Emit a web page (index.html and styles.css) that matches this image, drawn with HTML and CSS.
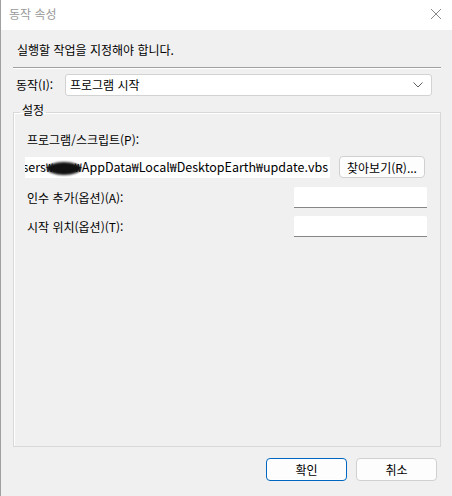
FILE: index.html
```html
<!DOCTYPE html>
<html lang="ko">
<head>
    <meta charset="utf-8"/>
    <title>동작 속성</title>
    <link rel="stylesheet" href="styles.css">
</head>
<body>
<div class="window">
    <div class="titlebar">
        <span class="title">동작 속성</span>
        <svg class="close" width="12" height="12" viewBox="0 0 12 12">
            <path d="M1 1 L11 11 M11 1 L1 11" stroke="#8a8a8a" stroke-width="1" fill="none"/>
        </svg>
    </div>
    <div class="content">
        <div class="prompt">실행할 작업을 지정해야 합니다.</div>
        <div class="separator"></div>
        <div class="action_row">
            <span class="action_label">동작(I):</span>
            <div class="select">
                <span>프로그램 시작</span>
                <svg width="10" height="6" viewBox="0 0 10 6">
                    <polyline points="0.5,0.5 5,5 9.5,0.5" stroke="#606060" stroke-width="1" fill="none"/>
                </svg>
            </div>
        </div>
        <fieldset class="group">
            <legend>설정</legend>
            <div class="group_body">
                <div class="field_label">프로그램/스크립트(P):</div>
                <div class="program_row">
                    <div class="path_input">
                        <span class="path_text">C:₩Users₩<span class="redact"></span>₩AppData₩Local₩DesktopEarth₩update.vbs</span>
                    </div>
                    <button class="btn browse">찾아보기(R)...</button>
                </div>
                <div class="option_row first">
                    <span class="field_label">인수 추가(옵션)(A):</span>
                    <div class="small_input"></div>
                </div>
                <div class="option_row">
                    <span class="field_label">시작 위치(옵션)(T):</span>
                    <div class="small_input"></div>
                </div>
            </div>
        </fieldset>
        <div class="buttons">
            <button class="btn dialog_btn default">확인</button>
            <button class="btn dialog_btn">취소</button>
        </div>
    </div>
</div>
</body>
</html>
```

FILE: styles.css
```css
body {
    margin: 0;
    background: #f0f0f0;
    font-family: "Noto Sans CJK KR", "Noto Sans", sans-serif;
    font-size: 12px;
    line-height: 16px;
    color: #000;
}

.window {
    width: 451px;
    height: 496px;
    border-left: 1px solid #a0a0a0;
    background: #f0f0f0;
    overflow: hidden;
}

.titlebar {
    height: 30px;
    background: #fff;
    display: flex;
    align-items: center;
    justify-content: space-between;
    padding: 0 10px 0 8px;
    box-sizing: border-box;
}

.title {
    color: #9a9a9a;
    margin-top: -3px;
}

.close {
    margin-top: -2px;
}

.content {
    padding: 0 11px 0 12px;
}

.prompt {
    padding-top: 12px;
    padding-left: 4px;
}

.separator {
    margin-top: 9px;
    height: 0;
    border-top: 1px solid #a0a0a0;
    border-bottom: 1px solid #fff;
}

.action_row {
    margin-top: 5px;
    display: flex;
    align-items: center;
    justify-content: space-between;
    padding-left: 3px;
}

.select {
    width: 367px;
    height: 22px;
    box-sizing: border-box;
    margin-right: 9px;
    background: #fff;
    border: 1px solid #d2d2d2;
    border-radius: 3px;
    display: flex;
    align-items: center;
    justify-content: space-between;
    padding: 0 8px 0 4px;
}

.group {
    margin: 6px 0 0 0;
    padding: 0;
    height: 345px;
    box-sizing: border-box;
    border: 1px solid #d8d8d8;
    box-shadow: inset 1px 1px 0 #fff;
}

.group legend {
    margin-left: 6px;
    padding: 0 2px 4px 2px;
    line-height: 16px;
}

.group_body {
    padding: 10px 12px 0 11px;
}

.field_label {
    padding-left: 2px;
}

.program_row {
    margin-top: 8px;
    display: flex;
    align-items: center;
    gap: 9px;
}

.path_input {
    width: 305px;
    height: 21px;
    background: #fff;
    overflow: hidden;
    display: flex;
    justify-content: flex-end;
    align-items: center;
    padding-right: 2px;
    box-sizing: border-box;
}

.path_text {
    white-space: nowrap;
    font-size: 12.5px;
}

.redact {
    display: inline-block;
    width: 34px;
    height: 13px;
    margin: 0 -6px;
    vertical-align: middle;
    background: #111;
    border-radius: 50%;
    filter: blur(1px);
}

.btn {
    font-family: inherit;
    font-size: 12px;
    color: #000;
    background: #fdfdfd;
    border: 1px solid #d0d0d0;
    border-radius: 4px;
    padding: 0;
}

.browse {
    width: 86px;
    height: 22px;
}

.option_row {
    margin-top: 8px;
    display: flex;
    align-items: center;
    justify-content: space-between;
}

.option_row.first {
    margin-top: 9px;
}

.small_input {
    width: 133px;
    height: 21px;
    box-sizing: border-box;
    background: #fff;
    border-bottom: 1px solid #868686;
    border-radius: 2px 2px 0 0;
    margin-right: 1px;
}

.buttons {
    margin-top: 11px;
    display: flex;
    justify-content: flex-end;
    gap: 9px;
    padding-right: 4px;
}

.dialog_btn {
    width: 81px;
    height: 23px;
}

.dialog_btn.default {
    border: 1px solid #0067c0;
    box-shadow: inset 0 0 0 1px #fff;
}
```
